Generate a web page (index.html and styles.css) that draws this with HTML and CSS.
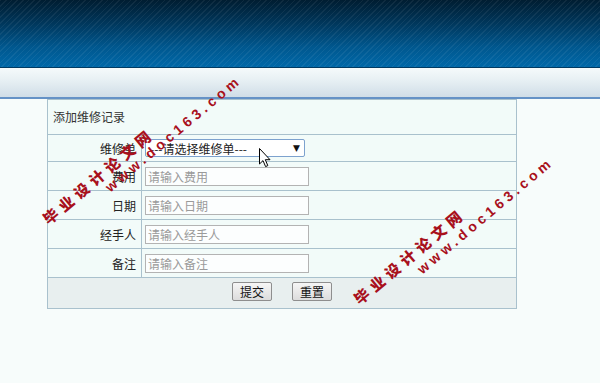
FILE: index.html
```html
<!DOCTYPE html>
<html lang="zh-CN">
<head>
<meta charset="utf-8">
<title>添加维修记录</title>
<link rel="stylesheet" href="styles.css">
</head>
<body>
<div class="top"></div>
<div class="bar"></div>
<div class="form">
  <div class="title">添加维修记录</div>
  <div class="row row-sel">
    <div class="label">维修单</div>
    <div class="field">
      <div class="select"><span class="sel-text">---请选择维修单---</span><span class="sel-arrow">▼</span></div>
    </div>
  </div>
  <div class="row">
    <div class="label">费用</div>
    <div class="field"><input class="inp" type="text" placeholder="请输入费用"></div>
  </div>
  <div class="row">
    <div class="label">日期</div>
    <div class="field"><input class="inp" type="text" placeholder="请输入日期"></div>
  </div>
  <div class="row">
    <div class="label">经手人</div>
    <div class="field"><input class="inp" type="text" placeholder="请输入经手人"></div>
  </div>
  <div class="row">
    <div class="label">备注</div>
    <div class="field"><input class="inp" type="text" placeholder="请输入备注"></div>
  </div>
  <div class="actions">
    <button class="btn" type="button">提交</button>
    <button class="btn" type="button">重置</button>
  </div>
</div>

<div class="wm wm-cn wm-a1">毕业设计论文网</div>
<div class="wm wm-en wm-a2">www.doc163.com</div>
<div class="wm wm-cn wm-b1">毕业设计论文网</div>
<div class="wm wm-en wm-b2">www.doc163.com</div>

<svg class="cursor" width="13" height="20" viewBox="0 0 13 20">
  <path d="M0.5 0.5 L0.5 16 L4 12.6 L6.6 18.6 L8.8 17.6 L6.3 11.7 L11 11.7 Z" fill="#fff" stroke="#000" stroke-width="1" stroke-linejoin="miter"/>
</svg>
</body>
</html>
```

FILE: styles.css
```css
html, body {
  margin: 0;
  padding: 0;
}
body {
  background: #f7fcfb;
  font-family: "Noto Sans CJK SC", "Liberation Sans", sans-serif;
  font-size: 12px;
  color: #333;
  width: 600px;
  height: 383px;
  overflow: hidden;
  position: relative;
}
.top {
  height: 67px;
  border-bottom: 1px solid #003b63;
  background:
    repeating-linear-gradient(135deg, rgba(255,255,255,0.06) 0 1px, rgba(255,255,255,0) 1px 4px),
    linear-gradient(#001d31 0%, #00375c 35%, #00578e 70%, #0068a8 100%);
}
.bar {
  height: 29px;
  border-bottom: 2px solid #6592c6;
  background: linear-gradient(#f5fafb 0%, #e6eff3 45%, #d0dde7 100%);
}
.form {
  margin-left: 47px;
  width: 468px;
  border: 1px solid #a9c1cd;
  background: #f2fbf9;
}
.title {
  height: 34px;
  line-height: 34px;
  padding-left: 5px;
  border-bottom: 1px solid #a9c1cd;
  color: #333;
}
.row {
  display: grid;
  grid-template-columns: 94px 1fr;
  height: 28px;
  border-bottom: 1px solid #a9c1cd;
}
.row-sel {
  height: 26px;
}
.label {
  border-right: 1px solid #a9c1cd;
  text-align: right;
  padding-right: 5px;
  display: flex;
  align-items: center;
  justify-content: flex-end;
  color: #222;
}
.field {
  display: flex;
  align-items: center;
  padding-left: 3px;
}
.inp {
  box-sizing: border-box;
  width: 164px;
  height: 19px;
  border: 1px solid #b3b3b3;
  background: #fcfefe;
  padding: 0 2px;
  margin: 0;
  font-family: "Noto Sans CJK SC", "Liberation Sans", sans-serif;
  font-size: 12px;
  color: #333;
  outline: none;
}
.inp::placeholder {
  color: #9a9a9a;
}
.select {
  box-sizing: border-box;
  width: 160px;
  height: 18px;
  border: 1px solid #7da2ce;
  border-radius: 2px;
  background: #fff;
  display: flex;
  align-items: center;
  justify-content: space-between;
  padding: 0 4px 0 4px;
  color: #222;
  font-size: 12px;
}
.sel-arrow {
  font-size: 9px;
  color: #111;
  font-family: "DejaVu Sans", sans-serif;
}
.actions {
  height: 30px;
  background: #e8efef;
  display: flex;
  justify-content: center;
  align-items: flex-start;
  gap: 20px;
  padding-top: 4px;
  box-sizing: border-box;
}
.btn {
  width: 40px;
  height: 19px;
  padding: 0;
  margin: 0;
  border: 1px solid #8e8e8e;
  border-radius: 2px;
  background: linear-gradient(#f6f6f6, #dcdcdc);
  font-family: "Noto Sans CJK SC", "Liberation Sans", sans-serif;
  font-size: 12px;
  color: #111;
  line-height: 17px;
}
.wm {
  position: absolute;
  color: #a8101c;
  font-weight: bold;
  white-space: nowrap;
  transform-origin: 0 50%;
  transform: rotate(-40deg);
}
.wm-cn {
  font-family: "Noto Sans CJK SC", sans-serif;
  font-size: 15px;
  line-height: 18px;
  letter-spacing: 5px;
  font-weight: 900;
}
.wm-en {
  font-family: "Liberation Sans", "DejaVu Sans", sans-serif;
  font-size: 14px;
  line-height: 16px;
  letter-spacing: 4px;
}
.wm-a1 { left: 45px; top: 212px; }
.wm-a2 { left: 107px; top: 181px; }
.wm-b1 { left: 356px; top: 292px; }
.wm-b2 { left: 419px; top: 263px; }
.cursor {
  position: absolute;
  left: 259px;
  top: 148px;
}
```
